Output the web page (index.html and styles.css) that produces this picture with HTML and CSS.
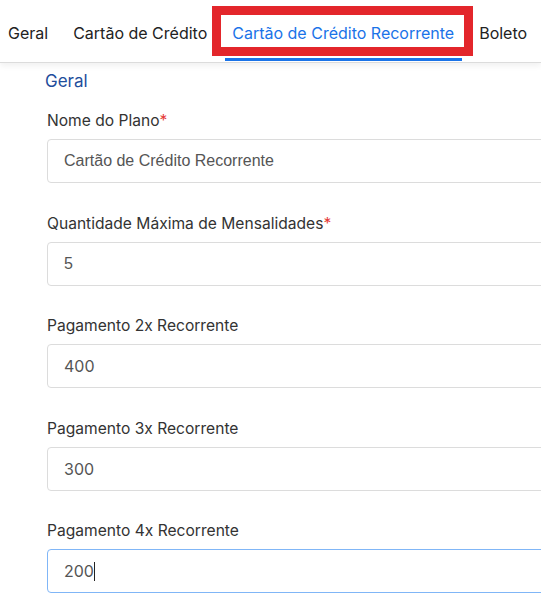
FILE: index.html
```html
<!DOCTYPE html>
<html lang="pt-BR">
<head>
<meta charset="utf-8">
<title>Planos</title>
<link rel="stylesheet" href="styles.css">
</head>
<body>
<nav class="tabs">
  <a class="tab">Geral</a>
  <a class="tab">Cartão de Crédito</a>
  <a class="tab active">Cartão de Crédito Recorrente<span class="mark"></span></a>
  <a class="tab">Boleto</a>
</nav>
<main class="content">
  <h2 class="section">Geral</h2>
  <div class="field">
    <label class="label">Nome do Plano<span class="req">*</span></label>
    <div class="input arial">Cartão de Crédito Recorrente</div>
  </div>
  <div class="field">
    <label class="label">Quantidade Máxima de Mensalidades<span class="req">*</span></label>
    <div class="input arial">5</div>
  </div>
  <div class="field">
    <label class="label">Pagamento 2x Recorrente</label>
    <div class="input">400</div>
  </div>
  <div class="field">
    <label class="label">Pagamento 3x Recorrente</label>
    <div class="input">300</div>
  </div>
  <div class="field">
    <label class="label">Pagamento 4x Recorrente</label>
    <div class="input focus">200<span class="caret"></span></div>
  </div>
</main>
</body>
</html>
```
FILE: styles.css
```css
html, body {
  margin: 0;
  padding: 0;
  background: #fff;
  overflow: hidden;
}
body {
  width: 541px;
  height: 607px;
  font-family: Inter, "Noto Sans", sans-serif;
  color: #222;
}
.tabs {
  display: flex;
  align-items: stretch;
  height: 62px;
  border-bottom: 1px solid #dcdcdc;
  box-shadow: 0 3px 6px rgba(0,0,0,0.06);
}
.tab {
  display: flex;
  align-items: center;
  padding: 4px 12.5px 0;
  font-size: 16px;
  color: #222;
  position: relative;
  white-space: nowrap;
}
.tab:first-child { padding-left: 8px; }
.tab.active {
  color: #1a73e8;
}
.tab.active::after {
  content: "";
  position: absolute;
  left: 5px;
  right: 5px;
  bottom: 1px;
  height: 3px;
  background: #1a73e8;
}
.mark {
  position: absolute;
  left: -8px;
  right: -6px;
  top: 6px;
  height: 50px;
  box-sizing: border-box;
  border: 9px solid #e3262b;
}
.content {
  padding-left: 47px;
}
.section {
  margin: 8px 0 0 -2px;
  font-size: 17px;
  font-weight: 400;
  color: #1f4e9c;
  line-height: 20px;
}
.field {
  margin-top: 20px;
}
.field + .field { margin-top: 30.5px; }
.label {
  display: block;
  font-size: 15.6px;
  line-height: 20px;
  color: #333;
  margin-bottom: 8px;
}
.req { color: #e53935; }
.input {
  box-sizing: border-box;
  width: 600px;
  height: 44px;
  border: 1px solid #dcdcdc;
  border-radius: 4px;
  padding: 0 16px;
  display: flex;
  align-items: center;
  font-size: 16px;
  color: #555;
}
.arial { font-family: "Liberation Sans", Arial, sans-serif; }
.input.focus { border-color: #80b6f7; }
.caret {
  display: inline-block;
  width: 1px;
  height: 19px;
  background: #222;
}
```
